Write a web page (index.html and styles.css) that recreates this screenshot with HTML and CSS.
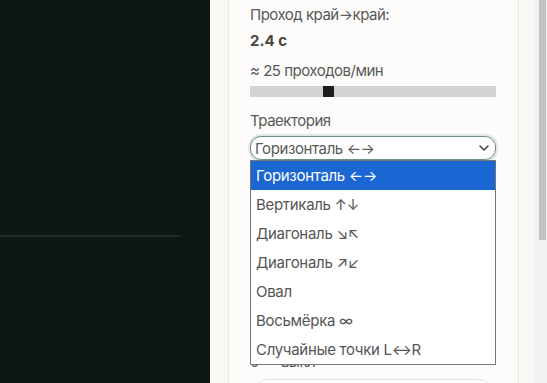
FILE: index.html
```html
<!DOCTYPE html>
<html>
    <head>
        <title>Траектория</title>
        <link rel="stylesheet" href="styles.css">
    </head>
    <body>
        <div class="stage">
            <div class="stage-top"></div>
        </div>
        <div class="sidebar">
            <div class="card">
                <p class="label">Проход край→край:</p>
                <p class="value">2.4 с</p>
                <p class="label hint">≈ 25 проходов/мин</p>
                <input class="slider" type="range" min="0" max="100" value="31">

                <p class="label gap">Траектория</p>
                <div class="select-wrap">
                    <div class="select">
                        <span>Горизонталь ←→</span>
                        <svg width="12" height="8" viewBox="0 0 12 8"><path d="M2 2l4 4 4-4" fill="none" stroke="#444" stroke-width="1.6" stroke-linecap="round" stroke-linejoin="round"/></svg>
                    </div>
                    <ul class="options">
                        <li class="active">Горизонталь ←→</li>
                        <li>Вертикаль ↑↓</li>
                        <li>Диагональ ↘↖</li>
                        <li>Диагональ ↗↙</li>
                        <li>Овал</li>
                        <li>Восьмёрка ∞</li>
                        <li>Случайные точки L↔R</li>
                    </ul>
                </div>

                <p class="label tail">0 — выкл</p>
                <div class="field"></div>
            </div>
        </div>
        <div class="scrollbar">
            <div class="thumb"></div>
        </div>
    </body>
</html>
```

FILE: styles.css
```css
* {
    box-sizing: border-box;
}
body {
    margin: 0;
    display: flex;
    height: 383px;
    overflow: hidden;
    font-family: Inter, "Noto Sans", sans-serif;
    font-size: 15px;
    color: #595959;
}
p {
    margin: 0;
}

.stage {
    width: 210px;
    flex-shrink: 0;
    background: #0f1714;
}
.stage-top {
    width: 180px;
    height: 237px;
    border-bottom: 2px solid #232b29;
}

.sidebar {
    flex: 1;
    background: #faf8f5;
    padding: 0 0 0 18px;
    overflow: hidden;
}

/* fake scrollbar, the window one is not drawn */
.scrollbar {
    width: 12px;
    flex-shrink: 0;
    background: #f1f1f1;
    padding: 0 1px 0 4px;
}
.thumb {
    height: 240px;
    background: #c1c1c1;
}

.card {
    width: 291px;
    margin-top: -16px;
    padding: 20px 22px 20px 21px;
    background: #fdfcfa;
    border: 1px solid #ebe7e2;
    border-radius: 10px;
}
.label {
    line-height: 20px;
    letter-spacing: -0.5px;
}
.value {
    margin-top: 6px;
    line-height: 20px;
    font-weight: 700;
    color: #474747;
}
.hint {
    margin-top: 10px;
}
.gap {
    margin-top: 14px;
}
.tail {
    margin-top: 192px;
}

.slider {
    -webkit-appearance: none;
    appearance: none;
    display: block;
    width: 100%;
    height: 11px;
    margin: 5px 0 0;
    background: #d3d3d3;
    outline: none;
}
.slider::-webkit-slider-thumb {
    -webkit-appearance: none;
    width: 11px;
    height: 11px;
    background: #1c1c1c;
    border: none;
}

.select-wrap {
    position: relative;
    margin-top: 5px;
}
.select {
    display: flex;
    align-items: center;
    justify-content: space-between;
    height: 24px;
    padding: 0 5px 0 4px;
    border: 1.5px solid #6f8e84;
    border-radius: 11px;
    background: #fff;
    box-shadow: 0 0 0 2px #dfe9e4;
    font-size: 15px;
    color: #595959;
    letter-spacing: -0.4px;
}

.options {
    position: absolute;
    top: 24px;
    left: 0;
    right: 0;
    margin: 0;
    padding: 0;
    list-style: none;
    background: #fff;
    border: 1px solid #767676;
    z-index: 1;
}
.options li {
    height: 29px;
    line-height: 29px;
    padding-left: 5px;
    font-size: 15px;
    color: #555;
    letter-spacing: -0.3px;
}
.options li.active {
    background: #1a66d2;
    color: #fff;
}

.field {
    height: 30px;
    margin: 7px 5px 0;
    border: 1px solid #e3e0db;
    border-radius: 12px;
    background: #fff;
}
```
